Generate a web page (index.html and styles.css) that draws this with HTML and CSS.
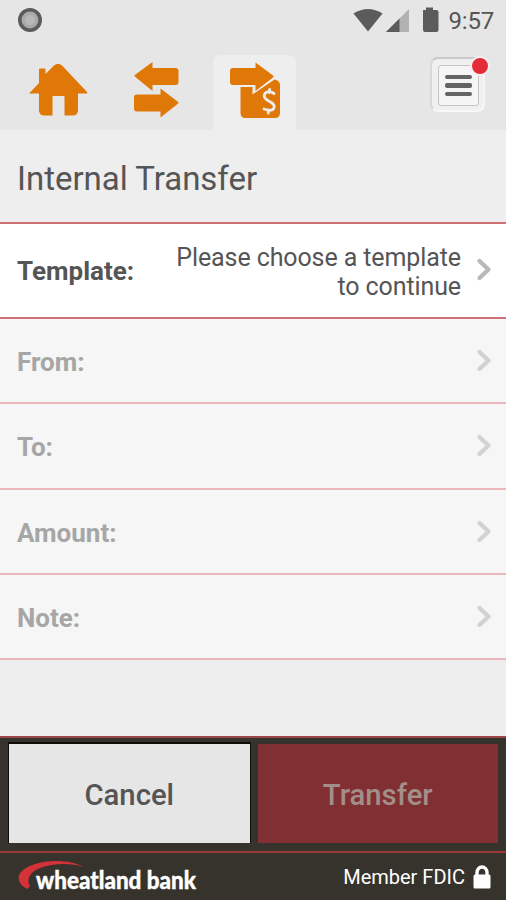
FILE: index.html
```html
<!DOCTYPE html>
<html lang="en">
<head>
<meta charset="utf-8">
<title>Internal Transfer</title>
<link rel="stylesheet" href="styles.css">
</head>
<body>
<div class="app">
  <header class="top">
    <div class="status">
      <svg class="record" width="26" height="26" viewBox="0 0 26 26"><circle cx="13" cy="13" r="10.2" fill="#aaa" stroke="#5b5b5b" stroke-width="3.6"/><circle cx="13" cy="13" r="5" fill="#b8b8b8"/></svg>
      <div class="status-right">
        <svg width="88" height="28" viewBox="0 0 88 28">
          <path d="M1.500 8.500Q16 -.5 30.500 8.500L16 26.500Z" fill="#5b5b5b"/>
          <path d="M57 4V27H34Z" fill="#b2b2b2"/><path d="M47.500 13.500V27H34Z" fill="#5b5b5b"/>
          <path d="M71 5h3V2.500h7V5h3.500q2 0 2 2v18q0 2-2 2H73q-2 0-2-2Z" fill="#5b5b5b"/>
        </svg>
        <span class="clock">9:57</span>
      </div>
    </div>
    <nav class="tabs">
      <a class="tab home"><svg width="62" height="56" viewBox="0 0 62 56"><path fill="#e07808" d="M2 33.500 12 23V9.500q0-1 1-1h4.500q1 0 1 1V14L27 5.500q4-3.500 8 0L60 32q1 1.500-.5 1.500H51V51q-1 4.500-5 4.500h-8.500V37q0-1-1-1h-10q-1 0-1 1v18.500H17q-4 0-5-4.500V33.500Z"/></svg></a>
      <a class="tab arrows"><svg width="46" height="58" viewBox="0 0 46 58"><path fill="#e07808" d="M.8 15.500Q0 14.800.8 14L18.500 1v6h23q3 0 3 3v11q0 3-3 3h-23v6Z"/><path fill="#e07808" d="M44.200 42.500Q45 41.800 44.200 41L26.500 27.500v6H3q-3 0-3 3v11q0 3 3 3h23.500v6Z"/></svg></a>
      <a class="tab active"><svg width="52" height="56" viewBox="0 0 52 56"><path fill="#e07808" d="M3 5h22.500V-.5L43 12.500Q44 13.500 43 14.500L25.500 28V22H3q-3 0-3-3V8q0-3 3-3Z"/><path fill="#e07808" d="M10.500 24H22.500V31.500L44.500 16.500q5.500 1 5.500 5.500V50q0 5-5 5H15.500q-5 0-5-5Z"/><path d="M44 30.500Q40.500 28 37 29Q33.500 30.500 34.500 34Q35 36 39.500 38.500Q45.500 41.500 44 45Q42 49 34 46M39.700 26.500 39.200 29.500M38.700 47 38.200 50" fill="none" stroke="#eee" stroke-width="2.800" stroke-linecap="round"/></svg></a>
      <a class="menu"><span class="menu-face"><i></i><i></i><i></i></span><b class="badge"></b></a>
    </nav>
  </header>
  <main>
    <h1 class="title"><span>Internal Transfer</span></h1>
    <div class="row template"><strong>Template:</strong><span class="value">Please choose a template<br>to continue</span><svg class="chev" width="18" height="26" viewBox="0 0 18 26"><path d="M4.500 4 13.500 12.500 4.500 21"/></svg></div>
    <div class="row off"><strong>From:</strong><svg class="chev" width="18" height="26" viewBox="0 0 18 26"><path d="M4.500 4 13.500 12.500 4.500 21"/></svg></div>
    <div class="row off"><strong>To:</strong><svg class="chev" width="18" height="26" viewBox="0 0 18 26"><path d="M4.500 4 13.500 12.500 4.500 21"/></svg></div>
    <div class="row off"><strong>Amount:</strong><svg class="chev" width="18" height="26" viewBox="0 0 18 26"><path d="M4.500 4 13.500 12.500 4.500 21"/></svg></div>
    <div class="row off"><strong>Note:</strong><svg class="chev" width="18" height="26" viewBox="0 0 18 26"><path d="M4.500 4 13.500 12.500 4.500 21"/></svg></div>
  </main>
  <div class="actions"><button class="cancel">Cancel</button><button class="transfer">Transfer</button></div>
  <footer>
    <svg class="logo" width="184" height="44" viewBox="0 0 184 44"><path fill="#d23238" d="M65.500 13C52 8.500 35 9.500 22 14C12 18 8 25 12 32L9.500 35C0 31 -2 22 4 17C17 5 50 4 65.500 13Z"/><text x="18" y="35" textLength="160" lengthAdjust="spacingAndGlyphs">wheatland bank</text></svg>
    <div class="member"><span>Member FDIC</span><svg width="18" height="24" viewBox="0 0 18 24"><path d="M4 11V7.500a5 5.500 0 0 1 10 0V11" fill="none" stroke="#fff" stroke-width="3.400"/><rect x=".5" y="9.500" width="17" height="14" rx="1.500" fill="#fff"/></svg></div>
  </footer>
</div>
</body>
</html>
```
FILE: styles.css
```css
* { box-sizing: border-box; }
body { margin: 0; font-family: Roboto, sans-serif; color: #555; }
.app { width: 506px; height: 900px; display: flex; flex-direction: column; background: #eee; overflow: hidden; }
.top { height: 130px; background: #e6e6e6; }
.status { height: 40px; display: flex; justify-content: space-between; padding: 0 12px 0 17px; }
.record { margin-top: 7px; }
.status-right { display: flex; gap: 9px; padding-top: 5px; }
.clock { font-size: 24px; line-height: 32px; letter-spacing: -.2px; }
.tabs { height: 90px; display: flex; }
.tab svg { display: block; overflow: visible; }
.home { width: 134px; padding: 20px 0 0 27px; }
.arrows { width: 79px; padding: 21px 0 0; }
.active { width: 83px; height: 75px; margin-top: 15px; padding: 8px 0 0 17px; background: #eee; border-radius: 7px 7px 0 0; }
.menu { position: relative; width: 55px; height: 55px; margin: 17px 0 0 134px; padding: 6px 0 0 6px; border: 2px solid #f7f7f7; border-top-color: #c9c9c9; border-left-color: #d8d8d8; border-radius: 8px; background: #f0f0f0; }
.menu-face { width: 41px; height: 41px; border: 1px solid #c5c5c5; border-radius: 3px; background: #f5f5f5; display: flex; flex-direction: column; align-items: center; justify-content: center; gap: 4px; }
.menu-face i { width: 27px; height: 4.500px; border-radius: 2px; background: #646464; }
.badge { position: absolute; top: -3px; right: -7px; width: 20px; height: 20px; border: 2px solid #f8f0f0; border-radius: 50%; background: #e42b38; }
main { flex: 1; }
.title { margin: 0; height: 92px; display: flex; align-items: center; padding: 5px 17px 0; font-size: 33px; font-weight: 400; letter-spacing: -.02px; }
.row { display: flex; align-items: center; justify-content: space-between; padding: 0 13px 0 17px; font-size: 26px; }
.row strong { font-size: 26px; font-weight: 700; }
.template { height: 97px; padding-top: 1px; background: #fff; border: solid #cf7174; border-width: 2px 0; }
.value { margin-left: auto; margin-right: 14px; padding-top: 2px; text-align: right; font-size: 25px; line-height: 29px; letter-spacing: -.1px; }
.chev { fill: none; stroke: #b9b9b9; stroke-width: 4.300; stroke-linecap: round; stroke-linejoin: round; }
.row .chev { margin-bottom: 2px; }
.off { height: 85.250px; background: #f6f6f6; border-bottom: 2px solid #e8b8ba; color: #a6a6a6; padding-top: 3px; }
.off .chev { stroke: #d2d2d2; }
.actions { height: 115px; background: #36332d; border-top: 2px solid #9c4447; display: flex; gap: 8px; padding: 6px 8px 8px 9px; }
.actions button { height: 99px; flex: 1; padding: 2px 0 0; border: 0; font: 500 29.300px Roboto, sans-serif; }
.cancel { background: #e6e6e6; color: #555; box-shadow: 0 -1px 0 1px #0d0c0b; }
.actions .transfer { background: #803032; color: #a38e89; }
footer { height: 49px; display: flex; justify-content: space-between; background: #36332d; border-top: 2px solid #9c373b; padding: 0 15px 0 18px; }
.logo { margin-top: 1px; overflow: visible; }
.logo text { font: 900 24px Lato, sans-serif; fill: #fff; stroke: #fff; stroke-width: .4px; }
.member { display: flex; align-items: center; gap: 8px; color: #fff; font-size: 20px; }
```
